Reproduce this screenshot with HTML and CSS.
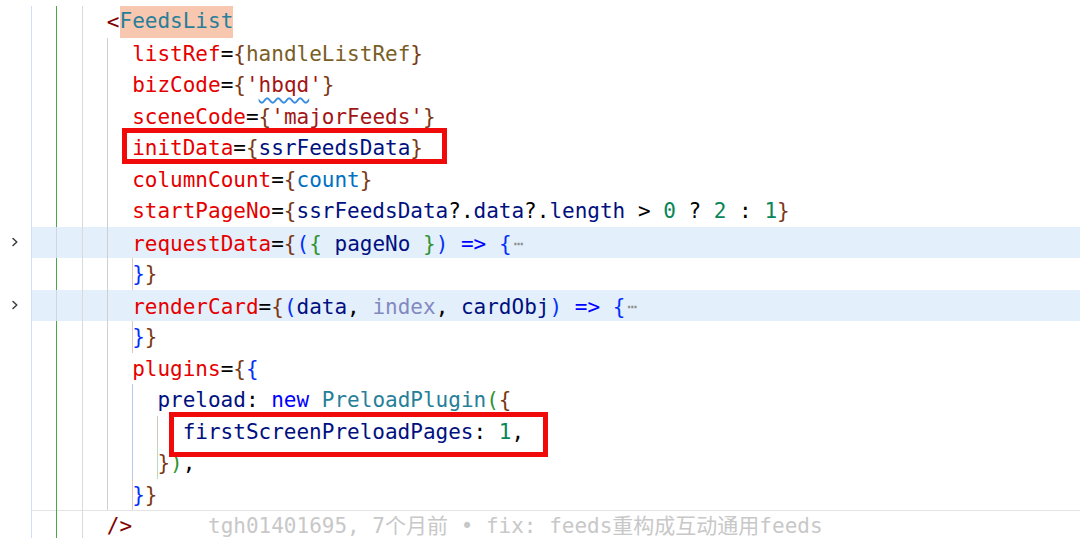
FILE: index.html
```html
<!DOCTYPE html>
<html>
<head>
<meta charset="utf-8">
<link rel="stylesheet" href="styles.css">
</head>
<body>
<div class="editor">
  <div class="ln"><span class="gut"></span><span class="code"><i class="g lav"></i><i class="g grn"></i><i class="g gr1"></i><span class="tx"><span class="tp">&lt;</span><span class="tag hlbg">FeedsList</span></span></span></div>
  <div class="ln"><span class="gut"></span><span class="code"><i class="g lav"></i><i class="g grn"></i><i class="g gr1"></i><i class="g gr2"></i><span class="tx"><span class="at">listRef</span><span class="op">=</span><span class="b3">{</span><span class="fn">handleListRef</span><span class="b3">}</span></span></span></div>
  <div class="ln"><span class="gut"></span><span class="code"><i class="g lav"></i><i class="g grn"></i><i class="g gr1"></i><i class="g gr2"></i><span class="tx"><span class="at">bizCode</span><span class="op">=</span><span class="b3">{</span><span class="str">'<span class="sq">hbqd</span>'</span><span class="b3">}</span></span></span></div>
  <div class="ln"><span class="gut"></span><span class="code"><i class="g lav"></i><i class="g grn"></i><i class="g gr1"></i><i class="g gr2"></i><span class="tx"><span class="at">sceneCode</span><span class="op">=</span><span class="b3">{</span><span class="str">'majorFeeds'</span><span class="b3">}</span></span></span></div>
  <div class="ln"><span class="gut"></span><span class="code"><i class="g lav"></i><i class="g grn"></i><i class="g gr1"></i><i class="g gr2"></i><span class="tx"><span class="at">initData</span><span class="op">=</span><span class="b3">{</span><span class="var">ssrFeedsData</span><span class="b3">}</span></span></span></div>
  <div class="ln"><span class="gut"></span><span class="code"><i class="g lav"></i><i class="g grn"></i><i class="g gr1"></i><i class="g gr2"></i><span class="tx"><span class="at">columnCount</span><span class="op">=</span><span class="b3">{</span><span class="cst">count</span><span class="b3">}</span></span></span></div>
  <div class="ln"><span class="gut"></span><span class="code"><i class="g lav"></i><i class="g grn"></i><i class="g gr1"></i><i class="g gr2"></i><span class="tx"><span class="at">startPageNo</span><span class="op">=</span><span class="b3">{</span><span class="var">ssrFeedsData</span>?.<span class="var">data</span>?.<span class="var">length</span> &gt; <span class="num">0</span> ? <span class="num">2</span> : <span class="num">1</span><span class="b3">}</span></span></span></div>
  <div class="ln hl"><span class="gut"><svg class="chev" width="8" height="12" viewBox="0 0 8 12"><path d="M2 2.5 L5.8 6 L2 9.5" fill="none" stroke="#3c3c3c" stroke-width="1.5" stroke-linecap="round" stroke-linejoin="round"/></svg></span><span class="code"><i class="g lav"></i><i class="g gr0"></i><i class="g gr1"></i><i class="g gr2"></i><span class="tx"><span class="at">requestData</span><span class="op">=</span><span class="b3">{</span><span class="b1">(</span><span class="b2">{</span> <span class="var">pageNo</span> <span class="b2">}</span><span class="b1">)</span> <span class="kw">=&gt;</span> <span class="b1">{</span><span class="fold">⋯</span></span></span></div>
  <div class="ln"><span class="gut"></span><span class="code"><i class="g lav"></i><i class="g grn"></i><i class="g gr1"></i><i class="g gr2"></i><span class="tx edge-br"><span class="b1">}</span><span class="b3">}</span></span></span></div>
  <div class="ln hl"><span class="gut"><svg class="chev" width="8" height="12" viewBox="0 0 8 12"><path d="M2 2.5 L5.8 6 L2 9.5" fill="none" stroke="#3c3c3c" stroke-width="1.5" stroke-linecap="round" stroke-linejoin="round"/></svg></span><span class="code"><i class="g lav"></i><i class="g gr0"></i><i class="g gr1"></i><i class="g gr2"></i><span class="tx"><span class="at">renderCard</span><span class="op">=</span><span class="b3">{</span><span class="b1">(</span><span class="var">data</span>, <span class="fade">index</span>, <span class="var">cardObj</span><span class="b1">)</span> <span class="kw">=&gt;</span> <span class="b1">{</span><span class="fold">⋯</span></span></span></div>
  <div class="ln"><span class="gut"></span><span class="code"><i class="g lav"></i><i class="g grn"></i><i class="g gr1"></i><i class="g gr2"></i><span class="tx edge-br"><span class="b1">}</span><span class="b3">}</span></span></span></div>
  <div class="ln"><span class="gut"></span><span class="code"><i class="g lav"></i><i class="g grn"></i><i class="g gr1"></i><i class="g gr2"></i><span class="tx"><span class="at">plugins</span><span class="op">=</span><span class="b3">{</span><span class="b1">{</span></span></span></div>
  <div class="ln"><span class="gut"></span><span class="code"><i class="g lav"></i><i class="g grn"></i><i class="g gr1"></i><i class="g gr2"></i><i class="g blu"></i><span class="tx"><span class="var">preload</span>: <span class="kw">new</span> <span class="tag">PreloadPlugin</span><span class="b2">(</span><span class="b3">{</span></span></span></div>
  <div class="ln"><span class="gut"></span><span class="code"><i class="g lav"></i><i class="g grn"></i><i class="g gr1"></i><i class="g gr2"></i><i class="g blu"></i><i class="g brn"></i><span class="tx"><span class="var">firstScreenPreloadPages</span>: <span class="num">1</span>,</span></span></div>
  <div class="ln"><span class="gut"></span><span class="code"><i class="g lav"></i><i class="g grn"></i><i class="g gr1"></i><i class="g gr2"></i><i class="g blu"></i><span class="tx edge-gn"><span class="b3">}</span><span class="b2">)</span>,</span></span></div>
  <div class="ln"><span class="gut"></span><span class="code"><i class="g lav"></i><i class="g grn"></i><i class="g gr1"></i><i class="g gr2"></i><span class="tx edge-br"><span class="b1">}</span><span class="b3">}</span></span></span></div>
  <div class="ln cur"><span class="gut"></span><span class="code"><i class="g lav"></i><i class="g grn"></i><i class="g gr1"></i><span class="tx"><span class="tp">/&gt;</span><span class="blame">tgh01401695, 7个月前 • fix: feeds重构成互动通用feeds</span></span></span></div>

  <div class="mark mark1"></div>
  <div class="mark mark2"></div>
</div>
</body>
</html>
```

FILE: styles.css
```css
html, body {
  margin: 0;
  padding: 0;
  background: #ffffff;
}
body {
  font-family: "DejaVu Sans Mono", "Noto Sans CJK SC", monospace;
  font-size: 21px;
  color: #000000;
  overflow: hidden;
  height: 538px;
}
.editor {
  position: relative;
  padding-top: 6px;
  height: 538px;
  box-sizing: border-box;
}
.ln {
  display: flex;
  height: 31.5px;
}
.gut {
  width: 31px;
  flex: none;
  display: flex;
  align-items: center;
  padding-left: 11px;
  box-sizing: border-box;
}
.code {
  flex: 1;
  display: flex;
  line-height: 31.5px;
  white-space: pre;
}
.ln.hl .code {
  background: #e4effc;
}
.ln.cur .code {
  box-shadow: inset 0 1px 0 #e4e4e4;
}
.g {
  flex: none;
  width: 2ch;
  box-sizing: border-box;
  border-left: 1px solid #d9d9d9;
}
.g.lav { border-left-color: #d2dcf6; }
.g.grn { border-left-color: #46a846; }
.g.gr0 { border-left-color: #cfd6de; }
.g.gr1 { border-left-color: #dadada; }
.g.gr2 { border-left-color: #d0d0d0; }
.g.blu { border-left-color: #bcc6f2; }
.g.brn { border-left-color: #d6c6ba; }
.tx {
  flex: none;
  padding-top: 1px;
}
.edge-br { box-shadow: inset 1px 0 0 #dccbbd; }
.edge-gn { box-shadow: inset 1px 0 0 #b9dcb9; }

.tp { color: #800000; }
.tag { color: #267f99; }
.hlbg {
  display: inline-block;
  background: #f8c7b0;
  height: 31.5px;
  vertical-align: top;
  margin-top: -1px;
}
.at { color: #e50000; }
.op { color: #000000; }
.b1 { color: #0431fa; }
.b2 { color: #319331; }
.b3 { color: #7b3814; }
.fn { color: #795e26; }
.str { color: #a31515; }
.sq {
  text-decoration-line: underline;
  text-decoration-style: wavy;
  text-decoration-color: #3a8ee2;
  text-decoration-thickness: 1.5px;
  text-underline-offset: 5px;
}
.var { color: #001080; }
.cst { color: #0070c1; }
.num { color: #098658; }
.kw { color: #0000ff; }
.fade { color: #8289c0; }
.fold {
  font-size: 16px;
  color: #8c8c8c;
  margin-left: 2px;
  vertical-align: 2px;
}
.blame {
  color: #c8c8c8;
  margin-left: 6ch;
}
.mark {
  position: absolute;
  border: 5px solid #f00a0a;
  box-sizing: border-box;
}
.mark1 {
  left: 122px;
  top: 128px;
  width: 325px;
  height: 36px;
}
.mark2 {
  left: 169px;
  top: 412px;
  width: 379px;
  height: 45px;
}
```
